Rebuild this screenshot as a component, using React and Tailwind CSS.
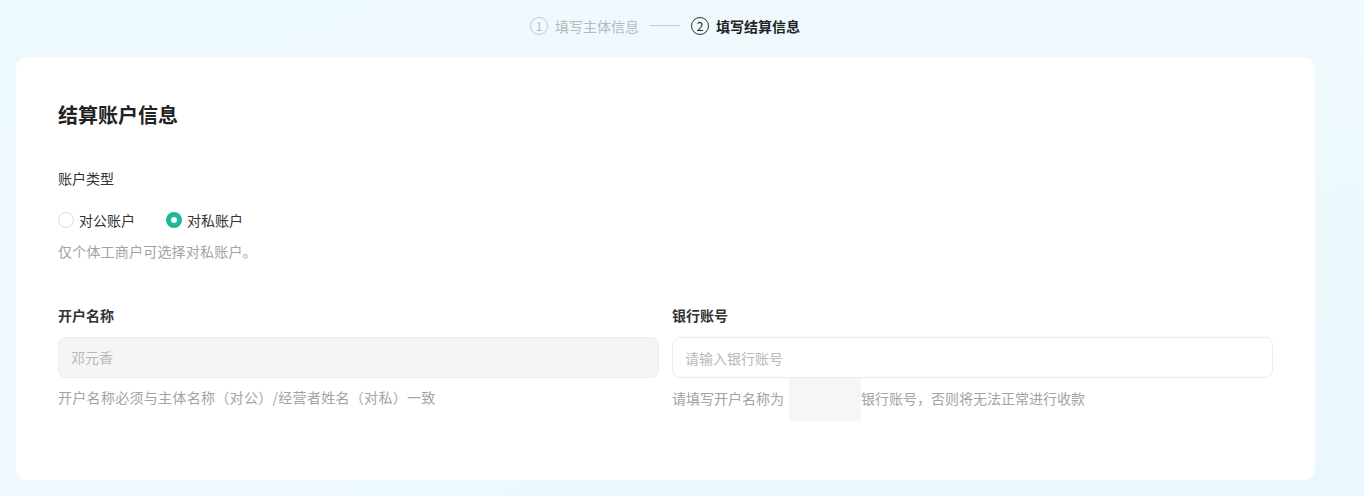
import React, { useState } from 'react';

const font = { fontFamily: '"Noto Sans CJK SC", "Noto Sans", sans-serif' };

const Radio = ({ checked, label, onClick }) => (
    <button onClick={onClick} className="flex items-center gap-[5px] text-[14px] text-[#333] leading-5">
        {checked ? (
            <span className="w-4 h-4 rounded-full bg-[#1bb89a] flex items-center justify-center">
                <span className="w-[6px] h-[6px] rounded-full bg-white" />
            </span>
        ) : (
            <span className="w-4 h-4 rounded-full border border-[#dcdcdc] bg-white" />
        )}
        {label}
    </button>
);

export default function App() {
    const [type, setType] = useState('private');
    const [account, setAccount] = useState('');

    return (
        <div className="w-[1364px] h-[496px] overflow-hidden bg-gradient-to-br from-[#eef9fd] via-[#f0fafe] to-[#eaf7fc]" style={font}>
            <div className="h-[57px] flex items-center justify-center pb-[6px] pr-[34px] text-[14px] leading-5">
                <div className="flex items-center text-[#b5b9bd]">
                    <span className="w-[18px] h-[18px] rounded-full border border-[#c4c8cc] flex items-center justify-center text-[12px] leading-none mr-[7px]">1</span>
                    填写主体信息
                    <span className="w-[30px] h-px bg-[#c9cdd1] mx-[11px]" />
                </div>
                <div className="flex items-center text-[#222] font-bold">
                    <span className="w-[18px] h-[18px] rounded-full border border-[#333] flex items-center justify-center text-[12px] leading-none mr-[7px] font-normal">2</span>
                    填写结算信息
                </div>
            </div>

            <div className="mx-4 w-[1299px] h-[423px] bg-white rounded-[12px] pt-[44px] px-[42px]">
                <h2 className="text-[20px] leading-7 font-bold text-[#222]">结算账户信息</h2>
                <div className="text-[14px] leading-5 text-[#333] mt-[39px]">账户类型</div>
                <div className="flex items-center gap-[31px] mt-[22px]">
                    <Radio checked={type === 'public'} label="对公账户" onClick={() => setType('public')} />
                    <Radio checked={type === 'private'} label="对私账户" onClick={() => setType('private')} />
                </div>
                <div className="text-[14px] leading-5 text-[#a3a3a3] mt-[11px] tracking-[0.2px]">仅个体工商户可选择对私账户。</div>

                <div className="grid grid-cols-2 gap-[13px] mt-[44px]">
                    <div>
                        <div className="text-[14px] leading-5 font-bold text-[#333]">开户名称</div>
                        <div className="mt-[12px] h-[41px] rounded-[8px] border border-[#ececec] bg-[#f5f5f5] flex items-center px-3 text-[14px] text-[#b8b8b8]">
                            邓元香
                        </div>
                        <div className="mt-[9px] text-[14px] leading-5 text-[#a3a3a3] tracking-[0.3px]">开户名称必须与主体名称（对公）/经营者姓名（对私）一致</div>
                    </div>
                    <div>
                        <div className="text-[14px] leading-5 font-bold text-[#333]">银行账号</div>
                        <input
                            value={account}
                            onChange={(e) => setAccount(e.target.value)}
                            placeholder="请输入银行账号"
                            className="mt-[12px] w-full h-[41px] rounded-[8px] border border-[#ececec] bg-white px-3 text-[14px] text-[#333] placeholder:text-[#b8b8b8] outline-none"
                        />
                        <div className="mt-[9px] text-[14px] leading-5 text-[#a3a3a3] flex items-center">
                            请填写开户名称为“
                            <span className="inline-block w-[72px] h-[43px] bg-[#f6f6f6] -ml-[9px] -my-[11px] relative top-[2px]" />
                            银行账号，否则将无法正常进行收款
                        </div>
                    </div>
                </div>
            </div>
        </div>
    );
}
